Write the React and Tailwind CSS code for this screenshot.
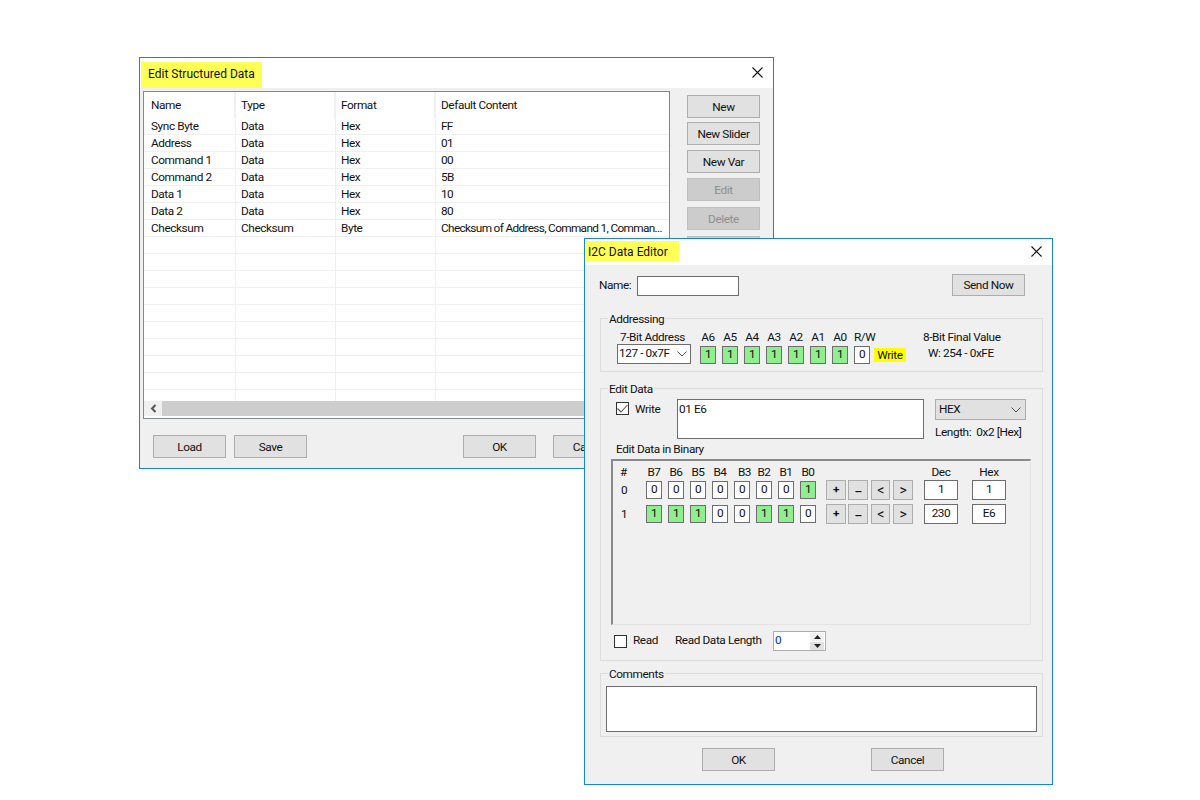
const fields = [
  ['Sync Byte', 'Data', 'Hex', 'FF'],
  ['Address', 'Data', 'Hex', '01'],
  ['Command 1', 'Data', 'Hex', '00'],
  ['Command 2', 'Data', 'Hex', '5B'],
  ['Data 1', 'Data', 'Hex', '10'],
  ['Data 2', 'Data', 'Hex', '80'],
  ['Checksum', 'Checksum', 'Byte', 'Checksum of Address, Command 1, Comman...'],
  ['', '', '', ''], ['', '', '', ''], ['', '', '', ''], ['', '', '', ''], ['', '', '', ''],
  ['', '', '', ''], ['', '', '', ''], ['', '', '', ''], ['', '', '', ''], ['', '', '', ''],
];

const addressBits = ['A6', 'A5', 'A4', 'A3', 'A2', 'A1', 'A0'];
const bitLabels = ['B7', 'B6', 'B5', 'B4', 'B3', 'B2', 'B1', 'B0'];
const bytes = [
  { bits: [0, 0, 0, 0, 0, 0, 0, 1], dec: '1', hex: '1' },
  { bits: [1, 1, 1, 0, 0, 1, 1, 0], dec: '230', hex: 'E6' },
];

function Close() {
  return (
    <svg width="11" height="11" viewBox="0 0 11 11" className="shrink-0">
      <path d="M0.5 0.5L10.5 10.5M10.5 0.5L0.5 10.5" stroke="#111" strokeWidth="1.1" fill="none" />
    </svg>
  );
}

function Chevron() {
  return (
    <svg width="10" height="6" viewBox="0 0 10 6" className="shrink-0">
      <path d="M0.5 0.5L5 5L9.5 0.5" stroke="#555" strokeWidth="1" fill="none" />
    </svg>
  );
}

function Btn({ children, className = '', disabled }) {
  return (
    <div className={`w-[73px] h-[23px] shrink-0 pt-[2px] flex items-center justify-center border ${disabled ? 'bg-[#cccccc] border-[#bfbfbf] text-[#8f8f8f]' : 'bg-[#e1e1e1] border-[#adadad]'} ${className}`}>
      {children}
    </div>
  );
}

function Bit({ value }) {
  return (
    <div className={`w-4 h-[18px] shrink-0 border border-[#6e6e6e] flex items-center justify-center pb-px ${value ? 'bg-[#90ee90]' : 'bg-white'}`}>
      {value}
    </div>
  );
}

function MiniBtn({ children, className = '' }) {
  return (
    <div className={`w-5 h-5 shrink-0 bg-[#e1e1e1] border border-[#adadad] flex items-center justify-center font-bold ${className}`}>
      {children}
    </div>
  );
}

function Group({ label, className = '', children }) {
  return (
    <div className={`relative border border-[#dcdcdc] ${className}`}>
      <span className="absolute left-[7px] -top-[7px] px-px bg-[#f0f0f0] leading-[14px]">{label}</span>
      {children}
    </div>
  );
}

function Check({ checked }) {
  return (
    <div className="w-[13px] h-[13px] shrink-0 bg-white border border-[#333] flex items-center justify-center">
      {checked && (
        <svg width="11" height="9" viewBox="0 0 11 9">
          <path d="M0.5 4.5L4 8L10.5 1" stroke="#555" strokeWidth="1.1" fill="none" />
        </svg>
      )}
    </div>
  );
}

function StructuredDialog() {
  return (
    <div className="absolute left-[139px] top-[57px] w-[635px] h-[412px] border border-[#1883d7] flex flex-col bg-[#f0f0f0]">
      <div className="h-[30px] bg-white flex items-end justify-between shrink-0">
        <div className="ml-px h-[26px] w-[121px] bg-[#ffff55] pl-[7px] pb-[3px] flex items-center text-[12px] tracking-normal">Edit Structured Data</div>
        <div className="mr-[10px] mb-[10px]"><Close /></div>
      </div>
      <div className="flex pl-[3px] pt-[3px]">
        <div className="w-[527px] h-[328px] shrink-0 border border-[#828790] bg-white flex flex-col overflow-hidden">
          <div className="h-[26px] shrink-0 flex items-center">
            <div className="w-[92px] shrink-0 h-full pl-[7px] pt-[2px] flex items-center border-r-2 border-[#f0f0f0]">Name</div>
            <div className="w-[100px] shrink-0 h-full pl-[5px] pt-[2px] flex items-center border-r-2 border-[#f0f0f0]">Type</div>
            <div className="w-[100px] shrink-0 h-full pl-[5px] pt-[2px] flex items-center border-r-2 border-[#f0f0f0]">Format</div>
            <div className="flex-1 pl-[5px] pt-[2px]">Default Content</div>
          </div>
          <div className="h-[283px] shrink-0 overflow-hidden">
            {fields.map((f, i) => (
              <div key={i} className="h-[17px] flex items-center border-b border-[#f0f0f0]">
                <div className="w-[92px] shrink-0 h-full pl-[7px] pt-[2px] flex items-center border-r border-[#f0f0f0]">{f[0]}</div>
                <div className="w-[100px] shrink-0 h-full pl-[5px] pt-[2px] flex items-center border-r border-[#f0f0f0]">{f[1]}</div>
                <div className="w-[100px] shrink-0 h-full pl-[5px] pt-[2px] flex items-center border-r border-[#f0f0f0]">{f[2]}</div>
                <div className="flex-1 min-w-0 h-full pl-[5px] pt-[2px] flex items-center whitespace-nowrap tracking-[-0.65px]">{f[3]}</div>
              </div>
            ))}
          </div>
          <div className="h-[15px] shrink-0 flex">
            <div className="w-[18px] bg-[#f0f0f0] flex items-center justify-center">
              <svg width="7" height="9" viewBox="0 0 7 9">
                <path d="M5.5 1L2 4.5L5.5 8" stroke="#555" strokeWidth="2" fill="none" />
              </svg>
            </div>
            <div className="flex-1 bg-[#cdcdcd]" />
          </div>
        </div>
        <div className="ml-[17px] pt-[4px] flex flex-col">
          <Btn>New</Btn>
          <Btn className="mt-1">New Slider</Btn>
          <Btn className="mt-[5px]">New Var</Btn>
          <Btn className="mt-[5px]" disabled>Edit</Btn>
          <Btn className="mt-[6px]" disabled>Delete</Btn>
          <Btn className="mt-[6px]" disabled> </Btn>
        </div>
      </div>
      <div className="flex pl-[13px] mt-4">
        <Btn>Load</Btn>
        <Btn className="ml-2">Save</Btn>
        <Btn className="ml-[156px]">OK</Btn>
        <Btn className="ml-[17px]">Cancel</Btn>
      </div>
    </div>
  );
}

function AddressingGroup() {
  return (
    <Group label="Addressing" className="ml-[15px] mr-[9px] mt-[22px] h-[54px] flex pt-[11px] pl-4">
      <div className="w-[74px] shrink-0">
        <div className="h-[14px] pl-[3px] pt-[2px] flex items-center whitespace-nowrap">7-Bit Address</div>
        <div className="h-5 bg-white border border-[#6e6e6e] flex items-center justify-between pl-[1px] pr-[3px] whitespace-nowrap">
          127 - 0x7F
          <Chevron />
        </div>
      </div>
      <div className="ml-[9px] flex gap-[6px]">
        {addressBits.map(a => (
          <div key={a} className="w-4">
            <div className="h-[14px] pt-[2px] flex items-center justify-center">{a}</div>
            <div className="mt-[2px]"><Bit value={1} /></div>
          </div>
        ))}
        <div className="w-4">
          <div className="h-[14px] pt-[2px] flex items-center whitespace-nowrap">R/W</div>
          <div className="mt-[2px]"><Bit value={0} /></div>
        </div>
      </div>
      <div className="mt-[18px] ml-1 w-8 h-[14px] pt-[2px] bg-[#ffff00] flex items-center justify-center">Write</div>
      <div className="ml-[17px] whitespace-nowrap">
        <div className="h-[14px] pt-[2px] flex items-center">8-Bit Final Value</div>
        <div className="h-[18px] pl-[5px] flex items-center mt-[1px]">W: 254 - 0xFE</div>
      </div>
    </Group>
  );
}

function BinaryPanel() {
  return (
    <div className="ml-[10px] mt-[3px] w-[420px] h-[166px] border-t-2 border-l-2 border-t-[#8a8a8a] border-l-[#8a8a8a] border-r border-b border-r-[#e3e3e3] border-b-[#e3e3e3]">
      <div className="mt-1 h-[14px] pt-[2px] flex items-center">
        <div className="w-[33px] pl-[7px]">#</div>
        <div className="flex gap-[6px]">
          {bitLabels.map(b => (
            <div key={b} className={`w-4 flex justify-center ${b === 'B3' ? 'pl-[5px]' : ''}`}>{b}</div>
          ))}
        </div>
        <div className="ml-[108px] w-[34px] text-center">Dec</div>
        <div className="ml-[14px] w-[34px] text-center">Hex</div>
      </div>
      {bytes.map((row, i) => (
        <div key={i} className={`h-5 flex items-center ${i ? 'mt-1' : 'mt-[1px]'}`}>
          <div className="w-[33px] pl-2 pt-[2px]">{i}</div>
          <div className="flex gap-[6px]">
            {row.bits.map((v, j) => <Bit key={j} value={v} />)}
          </div>
          <MiniBtn className="ml-[10px]">+</MiniBtn>
          <MiniBtn className="ml-[2px] pt-[3px]">–</MiniBtn>
          <MiniBtn className="ml-[3px] !w-[19px] text-[14px] font-normal">&lt;</MiniBtn>
          <MiniBtn className="ml-[3px] text-[14px] font-normal">&gt;</MiniBtn>
          <div className="ml-[11px] w-[34px] h-5 bg-white border border-[#6e6e6e] flex items-center justify-center">{row.dec}</div>
          <div className="ml-[14px] w-[34px] h-5 bg-white border border-[#6e6e6e] flex items-center justify-center">{row.hex}</div>
        </div>
      ))}
    </div>
  );
}

function EditDataGroup() {
  return (
    <Group label="Edit Data" className="ml-[15px] mr-[9px] mt-4 h-[273px] pt-[10px]">
      <div className="flex h-10 pl-[15px]">
        <div className="w-[61px] flex items-start pt-[3px]">
          <Check checked />
          <span className="ml-[6px] mt-px leading-[13px]">Write</span>
        </div>
        <div className="w-[247px] h-10 bg-white border border-[#6e6e6e] pl-[1px] pt-px">01 E6</div>
        <div className="ml-[11px] w-[91px]">
          <div className="h-[21px] bg-[#e1e1e1] border border-[#adadad] flex items-center justify-between pl-[3px] pr-[4px]">
            HEX
            <Chevron />
          </div>
          <div className="mt-[5px] h-[14px] pt-[2px] flex items-center whitespace-nowrap">Length:&nbsp; 0x2 [Hex]</div>
        </div>
      </div>
      <div className="mt-[3px] h-[14px] pt-[2px] pl-[15px] flex items-center">Edit Data in Binary</div>
      <BinaryPanel />
      <div className="mt-[6px] h-5 pl-[13px] flex items-center">
        <Check />
        <span className="ml-[6px] w-[42px]">Read</span>
        <span className="w-[98px]">Read Data Length</span>
        <div className="w-[53px] h-5 bg-white border border-[#adadad] flex items-center justify-between pl-px pr-px text-[#0033aa]">
          0
          <div className="w-[14px] h-[17px] flex flex-col gap-px">
            <div className="flex-1 bg-[#f0f0f0] flex items-center justify-center">
              <svg width="7" height="4" viewBox="0 0 7 4"><path d="M3.5 0L7 4H0z" fill="#222" /></svg>
            </div>
            <div className="flex-1 bg-[#e1e1e1] flex items-center justify-center">
              <svg width="7" height="4" viewBox="0 0 7 4"><path d="M0 0H7L3.5 4z" fill="#222" /></svg>
            </div>
          </div>
        </div>
      </div>
    </Group>
  );
}

function I2cDialog() {
  return (
    <div className="absolute left-[584px] top-[238px] w-[469px] h-[547px] border border-[#1883d7] flex flex-col bg-[#f0f0f0]">
      <div className="h-[26px] bg-white flex items-start justify-between shrink-0">
        <div className="ml-px mt-[2px] h-5 w-[93px] bg-[#ffff55] pl-[2px] pt-[2px] flex items-center text-[12px] tracking-normal">I2C Data Editor</div>
        <div className="mr-[10px] mt-[7px]"><Close /></div>
      </div>
      <div className="flex items-center pt-[9px] pl-[14px] pr-[27px]">
        <span className="w-[38px] mt-px">Name:</span>
        <div className="w-[102px] h-5 mt-[2px] bg-white border border-[#6e6e6e]" />
        <Btn className="ml-auto !h-[22px]">Send Now</Btn>
      </div>
      <AddressingGroup />
      <EditDataGroup />
      <Group label="Comments" className="ml-[15px] mr-[9px] mt-3 h-[64px] px-[5px] pt-3">
        <div className="h-[46px] bg-white border border-[#6e6e6e]" />
      </Group>
      <div className="flex pl-[117px] mt-[11px]">
        <Btn>OK</Btn>
        <Btn className="ml-[96px]">Cancel</Btn>
      </div>
    </div>
  );
}

export default function App() {
  return (
    <div className="relative w-[1200px] h-[800px] bg-white overflow-hidden text-[11.8px] tracking-[-0.4px] text-[#111] font-[Roboto,sans-serif]">
      <StructuredDialog />
      <I2cDialog />
    </div>
  );
}
